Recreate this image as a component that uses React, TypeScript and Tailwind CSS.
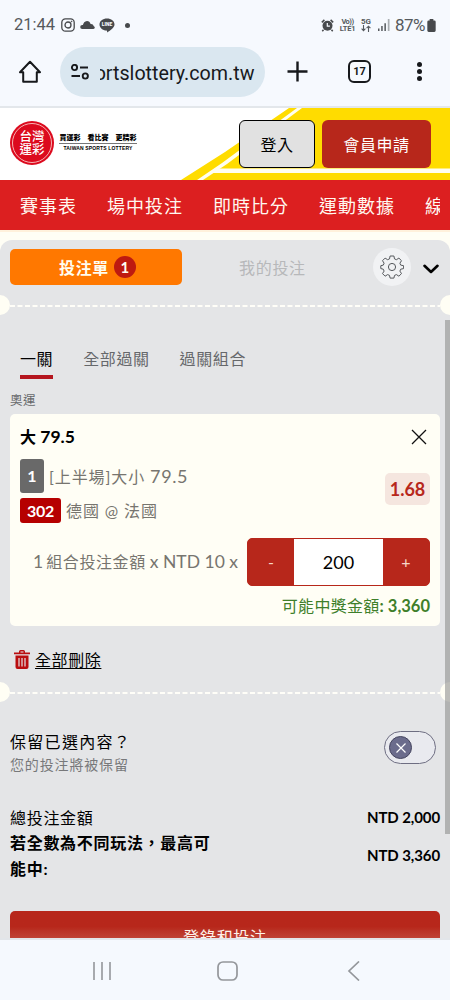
import { FC, ReactNode } from 'react';

const navItems = ['賽事表', '場中投注', '即時比分', '運動數據', '線上'];

const tabs = [
  { label: '一關', active: true },
  { label: '全部過關', active: false },
  { label: '過關組合', active: false },
];

const StatusBar: FC = () => (
  <div className="flex h-[50px] shrink-0 items-center justify-between pl-[14px] pr-[14px] font-['Roboto',sans-serif] text-[#55595d]">
    <div className="flex items-center">
      <span className="w-[46px] text-[16.500px] leading-none">21:44</span>
      <svg className="ml-[1px]" width="14" height="14" viewBox="0 0 14 14" fill="none" stroke="#47494c" strokeWidth="1.3">
        <rect x="0.8" y="0.8" width="12.4" height="12.4" rx="3.6" />
        <circle cx="7" cy="7" r="3" />
        <circle cx="10.6" cy="3.4" r="0.5" fill="#47494c" strokeWidth="0.6" />
      </svg>
      <svg className="ml-[5px]" width="15" height="10" viewBox="0 0 15 10" fill="#47494c">
        <path d="M2.2 9a2 2 0 0 1 0-4c.3 0 .5 0 .7.1C3.300 3.300 4.700 1 7 1c1.900 0 3 1.200 3.600 3 1.700-.2 2.700.8 3 2 .8.400 1.200 1 1.200 1.600 0 .8-.600 1.400-1.400 1.400z" />
      </svg>
      <svg className="ml-[4px]" width="16" height="15" viewBox="0 0 16 15">
        <path d="M8 0.500c4.200 0 7.500 2.600 7.500 5.900 0 3.200-4.500 6.300-7.500 8.100.1-.9.3-1.800-.5-2C3.600 12.200.5 9.600.5 6.400.5 3.100 3.800.5 8 .5z" fill="#47494c" />
        <text x="8" y="8.300" textAnchor="middle" fontSize="4.900" fontWeight="900" fill="#f6f9fe" fontFamily="Roboto">LINE</text>
      </svg>
      <span className="ml-[10px] size-[5px] rounded-full bg-[#47494c]" />
    </div>
    <div className="flex items-center">
      <svg width="13" height="13" viewBox="0 0 13 13" fill="none">
        <circle cx="6.500" cy="6.800" r="5" fill="#47494c" />
        <path d="M0.800 3.400 3.400 0.900M12.200 3.400 9.600 0.900M2.500 10.800 1.300 12.300M10.500 10.800l1.200 1.500" stroke="#47494c" strokeWidth="1.500" />
        <path d="M6.300 3.900v3.200h2.600" stroke="#f6f9fe" strokeWidth="1.200" />
      </svg>
      <div className="ml-[5px] flex w-[17px] flex-col items-center text-[7.500px] font-bold leading-[7px]">
        <span className="tracking-[-0.500px]">Vo))</span>
        <span className="tracking-[-0.200px]">LTE1</span>
      </div>
      <div className="ml-[4px] flex w-[12px] flex-col items-center text-[8px] font-bold leading-[7px]">
        <span>5G</span>
        <svg width="10" height="7" viewBox="0 0 10 7" fill="none" stroke="#55595d" strokeWidth="1.100">
          <path d="M2.500 0v5.500M0.600 3.600l1.900 2 1.900-2M7.500 7V1.200M5.600 3.200l1.900-2 1.900 2" />
        </svg>
      </div>
      <svg className="ml-[6px]" width="12" height="12" viewBox="0 0 12 12" fill="#55595d">
        <path d="M0 9.500h1.500V12H0zM3.200 7h1.500v5H3.200zM6.400 4.200h1.500V12H6.400z" />
        <path d="M9.800 0h1.700v12H9.800z" fill="#a9adb1" />
      </svg>
      <span className="ml-[5px] w-[31px] text-[17px] leading-none tracking-[-0.600px]">87%</span>
      <svg className="ml-[1px]" width="9" height="13" viewBox="0 0 9 14" fill="#47494c">
        <path d="M2.500 0h4v1.500H7.500A1.500 1.500 0 0 1 9 3v9.500A1.500 1.500 0 0 1 7.500 14h-6A1.500 1.500 0 0 1 0 12.500V3a1.500 1.500 0 0 1 1.500-1.500h1z" />
      </svg>
    </div>
  </div>
);

const BrowserBar: FC = () => (
  <div className="flex h-[58px] shrink-0 items-start border-b-2 border-[#e3e7eb] pl-[18px] font-['Roboto',sans-serif] text-[#17191c]">
    <svg className="mt-[10px]" width="24" height="24" viewBox="0 0 24 24" fill="none" stroke="#17191c" strokeWidth="2">
      <path d="M2 12.200h3.200V21.700h13.600V12.200H22L12 1.800z" strokeLinejoin="round" />
    </svg>
    <div className="ml-[18px] mt-[-3px] flex h-[50px] w-[205px] items-center rounded-full bg-[#dae7f0] pl-[10px]">
      <svg width="20" height="16" viewBox="0 0 20 16" fill="none" stroke="#17191c" strokeWidth="1.900">
        <circle cx="4.500" cy="3.500" r="2.600" />
        <path d="M10 3.500h8M1.500 12h8.500" />
        <circle cx="15.300" cy="12" r="2.600" />
      </svg>
      <div className="ml-[10px] mt-[3px] flex w-[154.500px] justify-end overflow-hidden">
        <span className="whitespace-nowrap text-[19.700px] leading-[28px]">ortslottery.com.tw</span>
      </div>
    </div>
    <svg className="ml-[22px] mt-[11px]" width="21" height="21" viewBox="0 0 21 21" stroke="#17191c" strokeWidth="2.400">
      <path d="M10.500 0.500v20M0.500 10.500h20" />
    </svg>
    <div className="ml-[40px] mt-[10px] flex size-[23px] items-center justify-center rounded-[6px] border-2 border-[#17191c] pt-px text-[11px] font-bold">
      17
    </div>
    <div className="ml-[46px] mt-[12px] flex flex-col gap-[2px]">
      <span className="size-[5px] rounded-full bg-[#17191c]" />
      <span className="size-[5px] rounded-full bg-[#17191c]" />
      <span className="size-[5px] rounded-full bg-[#17191c]" />
    </div>
  </div>
);

const SiteHeader: FC = () => (
  <header className="relative flex h-[72px] shrink-0 items-start bg-white pl-[9px]">
    <svg className="absolute left-0 top-0" width="450" height="72" viewBox="0 0 450 72">
      <path d="M289 0H450V72H181L225 44z" fill="#ffdc00" />
      <path d="M297 0h5L227 56 203 72h-6l25-17z" fill="#fffef0" />
      <path d="M216 60.500H450V65H209z" fill="#fffef0" />
    </svg>
    <div className="relative ml-px mt-[13px] flex size-[44px] items-center justify-center rounded-full bg-[#dc0a1e]">
      <div className="flex size-[40px] flex-col items-center justify-center rounded-full border border-[#f7b4b4] text-[12.500px] font-medium leading-[13px] text-white">
        <span>台灣</span>
        <span>運彩</span>
      </div>
    </div>
    <div className="relative ml-[5px] mt-[25px] flex w-[78px] flex-col items-center text-black">
      <div className="flex gap-[7px] whitespace-nowrap text-[7px] font-black leading-[9px]">
        <span>買運彩</span>
        <span>看比賽</span>
        <span>更精彩</span>
      </div>
      <div className="mt-[1px] h-px w-full bg-[#777]" />
      <div className="whitespace-nowrap font-['Liberation_Sans',sans-serif] text-[5px] font-bold leading-[9px] tracking-[0.150px]">TAIWAN SPORTS LOTTERY</div>
    </div>
    <button className="relative ml-[102px] mt-[12px] h-[48px] w-[76px] rounded-[6px] border border-black bg-[#e1e1e1] pt-px text-base tracking-[0.500px] text-black">登入</button>
    <button className="relative ml-[7px] mt-[12px] h-[48px] w-[109px] rounded-[6px] bg-[#b7271b] pt-px text-base tracking-[0.600px] text-white">會員申請</button>
  </header>
);

const NavBar: FC = () => (
  <nav className="flex h-[50px] shrink-0 items-center gap-[30px] overflow-hidden bg-[#dc1f20] pl-5 pt-[2px] text-[18px] tracking-[1px] text-[#fff8f0]">
    {navItems.map((item, index) => (
      <span key={item} className={index === navItems.length - 1 ? 'w-[15px] shrink-0 overflow-hidden whitespace-nowrap' : 'shrink-0'}>
        {item}
      </span>
    ))}
  </nav>
);

// ticket style separator with a notch on both edges
const Perforation: FC = () => (
  <div className="flex h-5 w-full shrink-0 items-center justify-between overflow-hidden">
    <span className="-ml-[10px] size-5 shrink-0 rounded-full bg-[#fffef4]" />
    <svg className="mt-[2px] shrink-0" width="430" height="2" viewBox="0 0 430 2">
      <path d="M0 1h430" stroke="#fffef8" strokeWidth="2" strokeDasharray="5 2.500" />
    </svg>
    <span className="-mr-[10px] size-5 shrink-0 rounded-full bg-[#fffef4]" />
  </div>
);

const SlipHeader: FC = () => (
  <div className="flex h-[55px] shrink-0 items-start px-[10px] pt-[9px]">
    <div className="flex h-[36px] w-[172px] items-center justify-center gap-[5px] rounded-[5px] bg-[#ff7800] pl-[3px] text-base font-bold tracking-[0.600px] text-[#fffdf0]">
      <span className="mt-[2px]">投注單</span>
      <span className="flex size-[22px] items-center justify-center rounded-full bg-[#be1a10] text-[15px] font-bold tracking-normal">1</span>
    </div>
    <span className="ml-[57px] mt-[7px] text-base tracking-[0.700px] text-[#b7b8ba]">我的投注</span>
    <div className="ml-auto mr-[12px] mt-[-1px] flex size-[38px] items-center justify-center rounded-full bg-[#f1f2f4]">
      <svg width="24" height="24" viewBox="0 0 24 24" fill="none" stroke="#55585c" strokeWidth="1" strokeLinejoin="round">
        <path d="M10.100 1h3.800l.6 2.900 1.900.8 2.500-1.600 2.600 2.600-1.600 2.500.8 1.900 2.900.6v2.900l-2.900.6-.8 1.900 1.600 2.500-2.600 2.600-2.500-1.600-1.900.8-.6 2.700h-3.800l-.6-2.700-1.900-.8-2.500 1.600-2.600-2.600 1.600-2.500-.8-1.900-2.500-.6v-2.900l2.500-.6.8-1.900-1.600-2.500 2.600-2.600 2.500 1.600 1.900-.8z" />
        <circle cx="12" cy="12" r="3.600" />
      </svg>
    </div>
    <svg className="mr-px mt-[15px]" width="16" height="11" viewBox="0 0 16 11" fill="none" stroke="#000" strokeWidth="2.600">
      <path d="M1.500 1.800 8 8l6.500-6.200" strokeLinecap="round" strokeLinejoin="round" />
    </svg>
  </div>
);

const StepButton: FC<{ children: ReactNode }> = ({ children }) => (
  <button className="flex w-[46px] items-center justify-center bg-[#b7271b] text-base text-[#f7d7c8]">{children}</button>
);

const BetCard: FC = () => (
  <div className="mx-[10px] h-[212px] shrink-0 rounded-[5px] bg-[#fffef5] px-[10px] pt-[10px]">
    <div className="flex h-[26px] items-center justify-between text-[17.500px] font-bold text-black">
      <span><span className="text-base">大</span> <span>79.5</span></span>
      <svg className="mr-[3px]" width="16" height="16" viewBox="0 0 16 16" stroke="#111" strokeWidth="1.300">
        <path d="M1 1l14 14M15 1 1 15" />
      </svg>
    </div>
    <div className="mt-[9px] flex items-center justify-between">
      <div className="flex flex-col gap-[5px] text-[16px] tracking-[0.900px] text-[#77756f]">
        <div className="flex h-[34px] items-center">
          <span className="flex h-[34px] w-[24px] items-center justify-center rounded-[3px] bg-[#696969] text-base font-bold tracking-normal text-white">1</span>
          <span className="ml-[5px] whitespace-nowrap">[上半場]大小 <span className="text-[18px] tracking-[0.600px]">79.5</span></span>
        </div>
        <div className="flex h-[25px] items-center">
          <span className="flex h-[25px] w-[41px] items-center justify-center rounded-[3px] bg-[#b60000] text-base font-bold tracking-[-0.300px] text-white">302</span>
          <span className="ml-[5px] whitespace-nowrap">德國 @ 法國</span>
        </div>
      </div>
      <div className="mt-[-4px] flex h-[32px] w-[45px] items-center justify-center rounded-[5px] bg-[#f5e6df] text-[18px] font-bold text-[#b7271b]">1.68</div>
    </div>
    <div className="mt-[15px] flex h-[48px] items-center justify-end">
      <div className="mr-[9px] flex items-center gap-[4px] whitespace-nowrap text-[17.500px] text-[#77756f]">
        <span className="-mr-px">1</span>
        <span className="text-base tracking-[0.600px]">組合投注金額</span>
        <span>x NTD 10 x</span>
      </div>
      <div className="flex h-[48px] w-[183px] overflow-hidden rounded-[5px] border border-[#b7271b] bg-[#b7271b]">
        <StepButton>-</StepButton>
        <div className="flex flex-1 items-center justify-center bg-white text-[18px] text-black">200</div>
        <StepButton>+</StepButton>
      </div>
    </div>
    <div className="mt-[8px] text-right text-base leading-[24px] tracking-[0.300px] text-[#3e7f2a]">
      可能中獎金額<span className="text-[16.500px] font-bold tracking-normal">: 3,360</span>
    </div>
  </div>
);

const SlipFooter: FC = () => (
  <div className="flex flex-col px-[10px] text-black">
    <div className="mt-[27px] flex h-[45px] items-start justify-between">
      <div>
        <div className="text-base leading-[26px] tracking-[1.300px]">保留已選內容？</div>
        <div className="mt-[-1px] text-[14px] leading-[22px] tracking-[0.850px] text-[#77787a]">您的投注將被保留</div>
      </div>
      <div className="mr-[4px] mt-[2px] flex h-[33px] w-[52px] items-center rounded-full border border-[#6e6e82] bg-[#e9eaef] pl-[4px]">
        <span className="flex size-[23px] items-center justify-center rounded-full border border-[#45455f] bg-[#6b6c8c]">
          <svg width="10" height="10" viewBox="0 0 10 10" stroke="#fff" strokeWidth="1.200">
            <path d="M0.500 0.500l9 9M9.500 0.500l-9 9" />
          </svg>
        </span>
      </div>
    </div>
    <div className="mt-[30px] flex h-[26px] items-center justify-between text-base">
      <span className="pt-[2px] tracking-[0.700px]">總投注金額</span>
      <span className="text-[15px] font-bold tracking-[-0.100px]">NTD 2,000</span>
    </div>
    <div className="flex h-[52px] items-center justify-between text-base font-bold">
      <span className="w-[208px] leading-[26px] tracking-[0.700px]">若全數為不同玩法，最高可能中:</span>
      <span className="pb-[2px] text-[15px] tracking-[-0.100px]">NTD 3,360</span>
    </div>
    <button className="mt-[29px] h-[52px] rounded-t-[5px] bg-linear-to-b from-[#b7271b] from-30% to-[#c34a3c] to-60% text-base tracking-[0.700px] text-[#fff3ea]">登錄和投注</button>
  </div>
);

const SystemNav: FC = () => (
  <div className="flex h-[60px] shrink-0 items-center bg-[#f5f9fe] pl-[92px] pt-[2px]">
    <svg width="20" height="20" viewBox="0 0 20 20" stroke="#94979b" strokeWidth="1.600">
      <path d="M2 1v18M10 1v18M18 1v18" />
    </svg>
    <svg className="ml-[105px]" width="21" height="20" viewBox="0 0 21 20" fill="none" stroke="#94979b" strokeWidth="1.700">
      <rect x="1" y="1" width="19" height="18" rx="5" />
    </svg>
    <svg className="ml-[109px]" width="13" height="20" viewBox="0 0 13 20" fill="none" stroke="#94979b" strokeWidth="1.700">
      <path d="M12 0.500 2 10l10 9.500" />
    </svg>
  </div>
);

const App: FC = () => {
  return (
    <div className="flex h-[1000px] w-[450px] flex-col overflow-hidden bg-[#f6f9fe] font-['Lato','Noto_Sans_CJK_TC',sans-serif]">
      <StatusBar />
      <BrowserBar />
      <SiteHeader />
      <NavBar />
      <div className="h-[2px] shrink-0 bg-[#fff1dc]" />
      <main className="relative flex h-[706px] shrink-0 flex-col overflow-hidden bg-[#fffef5] pt-[8px]">
        <div className="flex min-h-0 flex-1 flex-col overflow-hidden rounded-t-[12px] bg-[#e4e5e7]">
          <SlipHeader />
          <Perforation />
          <div className="mt-[30px] flex shrink-0 gap-[30px] pl-5">
            {tabs.map((tab) => (
              <div
                key={tab.label}
                className={
                  tab.active
                    ? 'h-[34px] border-b-4 border-[#b5161f] pt-[2px] text-base tracking-[0.600px] text-black'
                    : 'h-[34px] pt-[2px] text-base tracking-[0.600px] text-[#66686b]'
                }
              >
                {tab.label}
              </div>
            ))}
          </div>
          <div className="mt-[11px] h-[24px] shrink-0 pl-[10px] text-[12.500px] leading-[21px] tracking-[0.500px] text-[#66686b]">奧運</div>
          <BetCard />
          <div className="flex h-[56px] shrink-0 items-center gap-[5px] pl-[14px] pt-[11px]">
            <svg width="16" height="19" viewBox="0 0 16 19" fill="#b90e10">
              <path d="M0 2.500h5V1.500A1.500 1.500 0 0 1 6.500 0h3A1.500 1.500 0 0 1 11 1.500v1h5v1.800H0zM6.500 1.500v1h3v-1zM1.500 5.500h13V17a2 2 0 0 1-2 2h-9a2 2 0 0 1-2-2z" fillRule="evenodd" />
              <path d="M5 8v8.500M8 8v8.500M11 8v8.500" stroke="#e4e5e7" strokeWidth="1.200" />
            </svg>
            <span className="text-base tracking-[0.600px] text-black underline underline-offset-2">全部刪除</span>
          </div>
          <Perforation />
          <SlipFooter />
        </div>
        <div className="absolute right-0 top-[88px] h-[514px] w-[5px] bg-[#8f8f8f]/60" />
      </main>
      <div className="h-[2px] shrink-0 bg-[#e2e5e9]" />
      <SystemNav />
    </div>
  );
};

export default App;
